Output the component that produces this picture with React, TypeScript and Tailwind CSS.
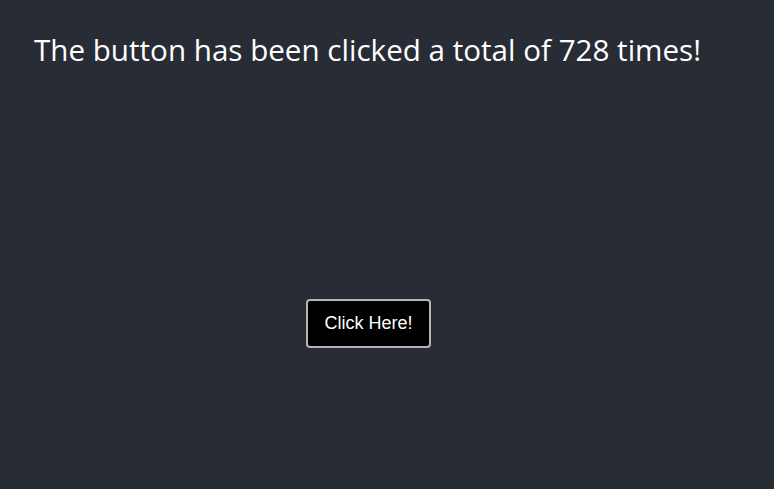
export default function App() {
  return (
    <div className="min-h-screen w-full bg-[#282c34] text-white">
      <h1 className="pt-[30px] pl-[34px] text-[29.6px] leading-[40px] font-normal font-['Open_Sans',sans-serif]">
        The button has been clicked a total of 728 times!
      </h1>
      <div className="mt-[229px] pl-[306px]">
        <button className="w-[125px] h-[49px] rounded-[4px] border-2 border-[#b4b4b4] bg-black text-[18px] font-['Liberation_Sans',Arial,sans-serif] text-white">
          Click Here!
        </button>
      </div>
    </div>
  );
}
